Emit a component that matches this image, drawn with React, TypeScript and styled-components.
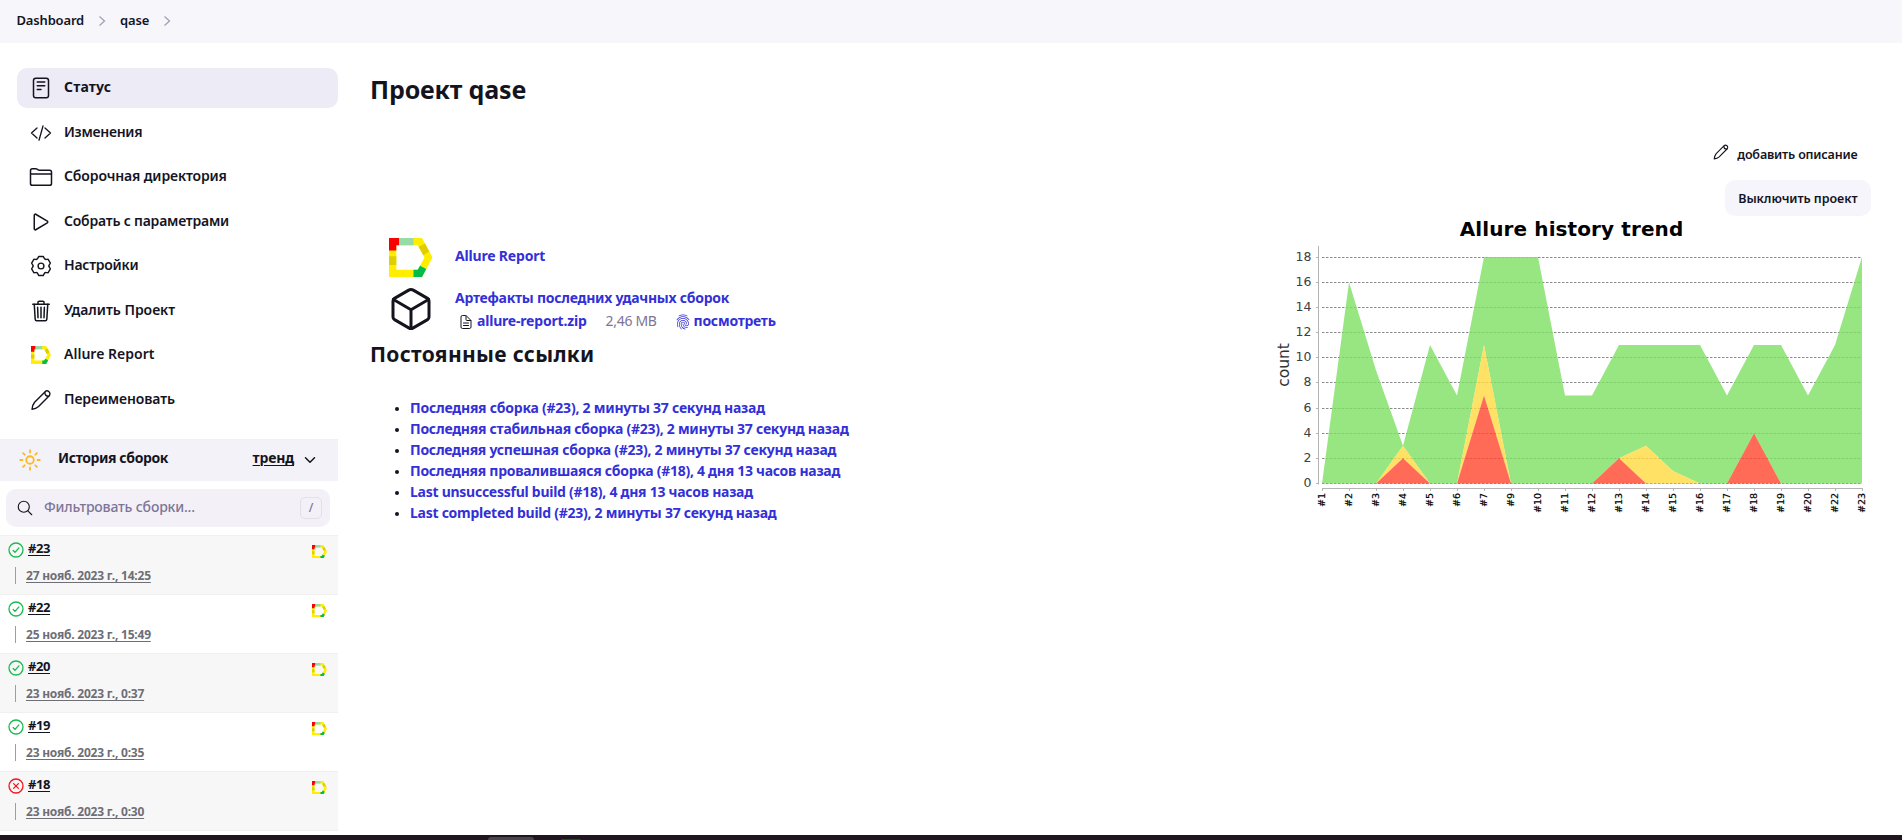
import React from 'react';
import styled, { createGlobalStyle } from 'styled-components';
import {
  IoReaderOutline,
  IoFolderOutline,
  IoPlayOutline,
  IoTrashOutline,
  IoSunnyOutline,
  IoSearchOutline,
  IoChevronDownOutline,
  IoDocumentTextOutline,
  IoFingerPrintOutline,
  IoCubeOutline,
} from 'react-icons/io5';

const ink = '#14141f';
const link = '#3330d8';

const GlobalStyle = createGlobalStyle`
  *, *::before, *::after { box-sizing: border-box; }
  body {
    margin: 0;
    background: #fff;
    color: ${ink};
    font-family: 'Noto Sans', sans-serif;
    font-size: 14px;
  }
  h1, h2, ul { margin: 0; padding: 0; }
  svg { display: block; flex-shrink: 0; }
`;

/* Label with its own tracking, in pixels */
const Label = styled.span<{ $track?: number }>`
  letter-spacing: ${(p) => p.$track ?? 0}px;
  white-space: nowrap;
`;

const Page = styled.div`
  display: grid;
  grid-template-rows: 43px 1fr 5px;
  width: 100%;
  height: 840px;
  overflow: hidden;
`;

const Breadcrumbs = styled.header`
  display: flex;
  align-items: center;
  padding: 0 0 3px 16.5px;
  background: #f6f6fb;
  font-size: 13px;
  font-weight: 600;
`;

const CrumbArrow = styled.svg`
  width: 8px;
  height: 12px;
  margin: 2px 14px 0;
  fill: none;
  stroke: #a3a0b8;
  stroke-width: 1.3;
`;

const Body = styled.div`
  display: grid;
  grid-template-columns: 338px 1fr;
  min-height: 0;
  overflow: hidden;
`;

const Sidebar = styled.aside`
  display: flex;
  flex-direction: column;
`;

const Tasks = styled.nav`
  display: flex;
  flex-direction: column;
  gap: 4.5px;
  height: 395.5px;
  padding: 25px 0 0 17px;
`;

const Task = styled.a<{ $active?: boolean }>`
  display: flex;
  align-items: center;
  gap: 11px;
  height: 40px;
  flex-shrink: 0;
  padding-left: 12px;
  border-radius: 10px;
  background: ${(p) => (p.$active ? '#edebf5' : 'transparent')};
  font-weight: ${(p) => (p.$active ? 700 : 600)};
  ${Label} { padding-bottom: 3px; }
`;

const TaskIcon = styled.span`
  display: flex;
  align-items: center;
  justify-content: center;
  width: 24px;
  height: 24px;
`;

const HistoryHeader = styled.div`
  display: flex;
  align-items: center;
  height: 42px;
  padding: 0 20px 0 18px;
  background: #f3f2f8;
  border-top: 1px solid #f0eff4;
  font-weight: 700;
`;

const SunIcon = styled(IoSunnyOutline)`
  color: #ffb81c;
  line { stroke-width: 38px; }
  circle { stroke-width: 38px; }
  path { stroke-width: 38px; }
`;

const HistoryTitle = styled.span`
  flex: 1;
  padding: 0 0 6px 16px;
  letter-spacing: -0.39px;
`;

const TrendLink = styled.a`
  padding-bottom: 6px;
  margin-right: 8px;
  letter-spacing: -0.16px;
  text-decoration: underline;
  text-decoration-thickness: 1px;
  text-underline-offset: 1.5px;
`;

const Search = styled.div`
  display: flex;
  align-items: center;
  height: 38px;
  margin: 8px 8px 8px 6px;
  padding: 0 8px 0 10px;
  border-radius: 10px;
  background: #f3f0f8;
`;

const Placeholder = styled.span`
  flex: 1;
  padding: 0 0 2px 10px;
  color: #7c7596;
  font-weight: 550;
  letter-spacing: -0.17px;
`;

const KeyHint = styled.kbd`
  display: flex;
  align-items: center;
  justify-content: center;
  width: 22px;
  height: 22px;
  padding-bottom: 1px;
  border: 1px solid #e3e0ea;
  border-radius: 5px;
  color: #7c7596;
  font: 500 12px 'Noto Sans', sans-serif;
`;

const Build = styled.div<{ $shaded: boolean }>`
  display: flex;
  flex-direction: column;
  height: 59px;
  flex-shrink: 0;
  padding: 5px 11px 0 8px;
  border-top: 1px solid #f0f0f1;
  background: ${(p) => (p.$shaded ? '#f7f7f7' : '#fff')};
`;

const BuildTop = styled.div`
  display: flex;
  align-items: center;
  height: 19px;
`;

const BuildNumber = styled.a`
  flex: 1;
  padding: 0 0 4px 4px;
  font-size: 13px;
  font-weight: 700;
  letter-spacing: -0.43px;
  line-height: 18px;
  text-decoration: underline;
  text-decoration-thickness: 1px;
  text-underline-offset: 1.5px;
`;

const BuildBadge = styled.span`
  padding-top: 3px;
`;

const BuildDate = styled.a`
  display: flex;
  align-items: center;
  height: 17px;
  margin: 7px 0 0 7px;
  padding-left: 10px;
  border-left: 1px solid #93a0ad;
  color: #6e6e76;
  font-size: 12px;
  font-weight: 700;
  letter-spacing: -0.22px;
  text-decoration: underline;
  text-decoration-thickness: 1px;
  text-underline-offset: 1.5px;
`;

const HistoryEnd = styled.div`
  height: 1px;
  background: #f0f0f1;
`;

const Main = styled.main`
  display: flex;
  justify-content: space-between;
  padding: 0 31px 0 32px;
`;

const Overview = styled.section`
  display: flex;
  flex-direction: column;
  padding-top: 31px;
`;

const Title = styled.h1`
  margin-bottom: 129px;
  font-size: 25px;
  font-weight: 700;
  line-height: 30px;
  letter-spacing: -0.15px;
`;

const Summary = styled.div<{ $height: number }>`
  display: flex;
  align-items: center;
  gap: 20px;
  height: ${(p) => p.$height}px;
  padding-left: 17px;
`;

const SummaryIcon = styled.span`
  display: flex;
  align-items: center;
  justify-content: center;
  width: 48px;
  height: 48px;
`;

const SummaryText = styled.div<{ $lift: number }>`
  display: flex;
  flex-direction: column;
  padding-bottom: ${(p) => p.$lift}px;
  line-height: 23px;
`;

const Link = styled.a<{ $track?: number }>`
  color: ${link};
  font-weight: 700;
  letter-spacing: ${(p) => p.$track ?? -0.24}px;
  white-space: nowrap;
`;

const FileRow = styled.div`
  display: flex;
  align-items: center;
  height: 23px;
  padding-left: 3px;
  > svg { margin: 3px 3px 0 0; }
`;

const FileSize = styled.span`
  margin: 0 18px 0 19px;
  color: #7c7596;
  letter-spacing: -0.31px;
`;

const Subtitle = styled.h2`
  margin: 4px 0 30px;
  font-size: 21px;
  font-weight: 700;
  line-height: 26px;
  letter-spacing: 0.32px;
`;

const Permalinks = styled.ul`
  padding-left: 40px;
  line-height: 21px;
  li::marker { color: ${ink}; font-size: 11px; }
`;

const Aside = styled.section`
  display: flex;
  flex-direction: column;
  align-items: flex-end;
  padding-top: 93px;
`;

const ActionButton = styled.button<{ $filled?: boolean }>`
  display: flex;
  align-items: center;
  gap: 7px;
  height: 36px;
  margin-bottom: ${(p) => (p.$filled ? 0 : 8)}px;
  padding: 0 13.5px;
  border: 0;
  border-radius: 10px;
  background: ${(p) => (p.$filled ? '#f6f5fb' : 'transparent')};
  color: ${ink};
  font: 600 12.5px 'Noto Sans', sans-serif;
  > svg { margin-bottom: 5px; }
`;

const Taskbar = styled.footer`
  display: flex;
  align-items: flex-end;
  gap: 27px;
  padding-left: 488px;
  background: #21151f;
`;

const TaskbarWindow = styled.span<{ $w: number; $h: number; $color: string }>`
  width: ${(p) => p.$w}px;
  height: ${(p) => p.$h}px;
  border-radius: ${(p) => p.$h}px ${(p) => p.$h}px 0 0;
  background: ${(p) => p.$color};
`;

const PencilIcon = ({ size = 24, width = 1.4 }: { size?: number; width?: number }) => (
  <svg width={size} height={size} viewBox="0 0 24 24" fill="none" stroke={ink} strokeWidth={width} strokeLinejoin="round" strokeLinecap="round">
    <path d="M3 21.2C3.2 18.6 4 16.2 5.6 14.2L15.9 3.9C17 2.7 18.8 2.6 20 3.7C21.3 4.9 21.2 6.7 20 8L9.6 18.4C7.8 20 5.6 20.9 3 21.2Z" />
    <path d="M15.8 4.2C15.8 6.600 17.300 8.200 19.700 8.200" />
  </svg>
);

const CodeIcon = () => (
  <svg width="24" height="24" viewBox="0 0 24 24" fill="none" stroke={ink} strokeWidth="1.3" strokeLinecap="round" strokeLinejoin="round">
    <path d="M8 7L2.5 12L8 17M16 7L21.500 12L16 17M14 5L10 19.200" />
  </svg>
);

/* Six rounded teeth, the first one pointing up */
const gearOutline = [0, 60, 120, 180, 240, 300]
  .flatMap((a) => [[a - 20, 8.7], [a - 13, 9.8], [a + 13, 9.8], [a + 20, 8.7]])
  .map(([deg, r]) => {
    const t = ((deg - 90) * Math.PI) / 180;
    return `${(12 + r * Math.cos(t)).toFixed(2)} ${(12 + r * Math.sin(t)).toFixed(2)}`;
  });

const gearPath =
  `M${gearOutline[0]}` +
  gearOutline
    .slice(1)
    .map((p, i) => ((i + 1) % 4 === 0 ? `A2.200 2.200 0 0 0 ${p}` : `L${p}`))
    .join('') +
  `A2.200 2.200 0 0 0 ${gearOutline[0]}Z`;

const GearIcon = () => (
  <svg width="24" height="24" viewBox="0 0 24 24" fill="none" stroke={ink} strokeWidth="1.4" strokeLinejoin="round">
    <path d={gearPath} />
    <circle cx="12" cy="12" r="2.900" />
  </svg>
);

const AllureIcon = ({ width }: { width: number }) => (
  <svg width={width} height={(width * 39) / 43.5} viewBox="0 0 43.5 39">
    <path fill="#ffee00" fillRule="evenodd" d="M0 0H33L43.500 19.500L33 39H0ZM7.300 7.300V31.700H28.800L35.500 19.500L28.800 7.300Z" />
    <path fill="#fa0000" d="M0 0H10V7.300H7.300V12.500H0Z" />
    <path fill="#97dca6" d="M10 0H24.500V7.300H10Z" />
    <path fill="#dfce00" d="M0 18.300H7.300V27H0ZM36 5.600L40.300 13.600L34.300 17.200L29.600 8.800Z" />
    <path fill="#00bd4b" d="M24.500 39H33L37.300 31L31 27.700L28.800 31.700H24.500Z" />
  </svg>
);

const ResultIcon = ({ ok }: { ok: boolean }) => (
  <svg width="16" height="16" viewBox="0 0 16 16" fill="none" stroke={ok ? '#1bb954' : '#f5151d'} strokeWidth="1.3" strokeLinecap="round" strokeLinejoin="round">
    <circle cx="8" cy="8" r="7" />
    {ok ? <path d="M5.200 8.500L7 10.400L10.900 5.900" /> : <path d="M5.600 5.600L10.400 10.400M10.400 5.600L5.600 10.400" />}
  </svg>
);

const tasks = [
  { text: 'Статус', track: 0.15, icon: <IoReaderOutline size={24} /> },
  { text: 'Изменения', track: -0.27, icon: <CodeIcon /> },
  { text: 'Сборочная директория', track: -0.13, icon: <IoFolderOutline size={24} /> },
  { text: 'Собрать с параметрами', track: -0.22, icon: <IoPlayOutline size={24} /> },
  { text: 'Настройки', track: -0.25, icon: <GearIcon /> },
  { text: 'Удалить Проект', track: -0.03, icon: <IoTrashOutline size={24} /> },
  { text: 'Allure Report', track: 0.02, icon: <AllureIcon width={20} /> },
  { text: 'Переименовать', track: -0.12, icon: <PencilIcon /> },
];

const builds = [
  { id: '#23', date: '27 нояб. 2023 г., 14:25', ok: true },
  { id: '#22', date: '25 нояб. 2023 г., 15:49', ok: true },
  { id: '#20', date: '23 нояб. 2023 г., 0:37', ok: true },
  { id: '#19', date: '23 нояб. 2023 г., 0:35', ok: true },
  { id: '#18', date: '23 нояб. 2023 г., 0:30', ok: false },
];

const permalinks: [string, number][] = [
  ['Последняя сборка (#23), 2 минуты 37 секунд назад', -0.24],
  ['Последняя стабильная сборка (#23), 2 минуты 37 секунд назад', -0.26],
  ['Последняя успешная сборка (#23), 2 минуты 37 секунд назад', -0.27],
  ['Последняя провалившаяся сборка (#18), 4 дня 13 часов назад', -0.28],
  ['Last unsuccessful build (#18), 4 дня 13 часов назад', -0.26],
  ['Last completed build (#23), 2 минуты 37 секунд назад', -0.26],
];

/* Per build: name, failed, broken, passed */
const trend: [string, number, number, number][] = [
  ['#1', 0, 0, 0], ['#2', 0, 0, 16], ['#3', 0, 0, 9], ['#4', 2, 1, 0], ['#5', 0, 0, 11],
  ['#6', 0, 0, 7], ['#7', 7, 4, 7], ['#9', 0, 0, 18], ['#10', 0, 0, 18], ['#11', 0, 0, 7],
  ['#12', 0, 0, 7], ['#13', 2, 0, 9], ['#14', 0, 3, 8], ['#15', 0, 1, 10], ['#16', 0, 0, 11],
  ['#17', 0, 0, 7], ['#18', 4, 0, 7], ['#19', 0, 0, 11], ['#20', 0, 0, 7], ['#22', 0, 0, 11],
  ['#23', 0, 0, 18],
];

const px = (i: number) => 52 + 27 * i;
const py = (v: number) => 267.5 - 12.58 * v;

const band = (low: (r: number[]) => number, high: (r: number[]) => number) => {
  const rows = trend.map(([, f, b, p]) => [f, b, p]);
  const top = rows.map((r, i) => `${px(i)},${py(high(r))}`);
  const bottom = rows.map((r, i) => `${px(i)},${py(low(r))}`).reverse();
  return [...top, ...bottom].join(' ');
};

const ChartText = styled.text<{ $size: number; $bold?: boolean; $color?: string }>`
  font-family: 'DejaVu Sans', sans-serif;
  font-size: ${(p) => p.$size}px;
  font-weight: ${(p) => (p.$bold ? 700 : 400)};
  fill: ${(p) => p.$color ?? '#000'};
`;

const TickName = styled(ChartText)`
  stroke: #000;
  stroke-width: 0.2px;
`;

const TrendChart = () => (
  <svg width="601" height="304" viewBox="0 0 601 304">
    <ChartText $size={20} $bold x="301.500" y="19.500" textAnchor="middle" textLength="223.500">Allure history trend</ChartText>
    <ChartText $size={15.5} $color="#333" textAnchor="middle" transform="translate(18.500 149) rotate(-90)">count</ChartText>
    {[0, 2, 4, 6, 8, 10, 12, 14, 16, 18].map((v) => {
      const y = Math.floor(py(v)) + 0.5;
      return (
        <g key={v}>
          <path d={`M52 ${y}H592`} stroke="#8a8a8a" strokeDasharray="2.500 1.500" />
          <path d={`M46 ${y}H48.500`} stroke="#b4b4b4" />
          <ChartText $size={12.5} $color="#404040" x="41.500" y={y + 3.5} textAnchor="end">{v}</ChartText>
        </g>
      );
    })}
    <g fillOpacity="0.8">
      <polygon fill="#7de063" points={band(([f, b]) => f + b, ([f, b, p]) => f + b + p)} />
      <polygon fill="#ffd940" points={band(([f]) => f, ([f, b]) => f + b)} />
      <polygon fill="#ff462d" points={band(() => 0, ([f]) => f)} />
    </g>
    <path d="M48.500 30V268.500M52 272.500H592.500" stroke="#b4b4b4" fill="none" />
    {trend.map(([name], i) => (
      <g key={name}>
        <path d={`M${px(i) + 0.5} 272V275`} stroke="#b4b4b4" />
        <TickName $size={9.5} textAnchor="end" transform={`translate(${px(i) + 3.2} 277) rotate(-90)`}>{name}</TickName>
      </g>
    ))}
  </svg>
);

const CrumbChevron = () => (
  <CrumbArrow viewBox="0 0 8 12">
    <path d="M1.500 1.500L6.500 6L1.500 10.500" />
  </CrumbArrow>
);

export default function App() {
  return (
    <Page>
      <GlobalStyle />
      <Breadcrumbs>
        <Label $track={-0.17}>Dashboard</Label>
        <CrumbChevron />
        <Label $track={-0.2}>qase</Label>
        <CrumbChevron />
      </Breadcrumbs>
      <Body>
        <Sidebar>
          <Tasks>
            {tasks.map((t, i) => (
              <Task key={t.text} $active={i === 0}>
                <TaskIcon>{t.icon}</TaskIcon>
                <Label $track={t.track}>{t.text}</Label>
              </Task>
            ))}
          </Tasks>
          <HistoryHeader>
            <SunIcon size={24} />
            <HistoryTitle>История сборок</HistoryTitle>
            <TrendLink>тренд</TrendLink>
            <IoChevronDownOutline size={16} />
          </HistoryHeader>
          <Search>
            <IoSearchOutline size={18} />
            <Placeholder>Фильтровать сборки...</Placeholder>
            <KeyHint>/</KeyHint>
          </Search>
          {builds.map((b, i) => (
            <Build key={b.id} $shaded={i % 2 === 0}>
              <BuildTop>
                <ResultIcon ok={b.ok} />
                <BuildNumber>{b.id}</BuildNumber>
                <BuildBadge><AllureIcon width={15} /></BuildBadge>
              </BuildTop>
              <BuildDate>{b.date}</BuildDate>
            </Build>
          ))}
          <HistoryEnd />
        </Sidebar>
        <Main>
          <Overview>
            <Title>Проект qase</Title>
            <Summary $height={48}>
              <SummaryIcon><AllureIcon width={43.5} /></SummaryIcon>
              <SummaryText $lift={3}><Link $track={-0.18}>Allure Report</Link></SummaryText>
            </Summary>
            <Summary $height={56}>
              <SummaryIcon><IoCubeOutline size={48} /></SummaryIcon>
              <SummaryText $lift={1}>
                <Link $track={-0.26}>Артефакты последних удачных сборок</Link>
                <FileRow>
                  <IoDocumentTextOutline size={16} />
                  <Link $track={-0.19}>allure-report.zip</Link>
                  <FileSize>2,46 MB</FileSize>
                  <IoFingerPrintOutline size={16} color={link} />
                  <Link $track={-0.27}>посмотреть</Link>
                </FileRow>
              </SummaryText>
            </Summary>
            <Subtitle>Постоянные ссылки</Subtitle>
            <Permalinks>
              {permalinks.map(([text, track]) => (
                <li key={text}><Link $track={track}>{text}</Link></li>
              ))}
            </Permalinks>
          </Overview>
          <Aside>
            <ActionButton>
              <PencilIcon size={18} width={1.5} />
              <Label $track={-0.17}>добавить описание</Label>
            </ActionButton>
            <ActionButton $filled>
              <Label $track={-0.05}>Выключить проект</Label>
            </ActionButton>
            <TrendChart />
          </Aside>
        </Main>
      </Body>
      <Taskbar>
        <TaskbarWindow $w={46} $h={3} $color="#4b444b" />
        <TaskbarWindow $w={20} $h={1} $color="#1c4f22" />
      </Taskbar>
    </Page>
  );
}
